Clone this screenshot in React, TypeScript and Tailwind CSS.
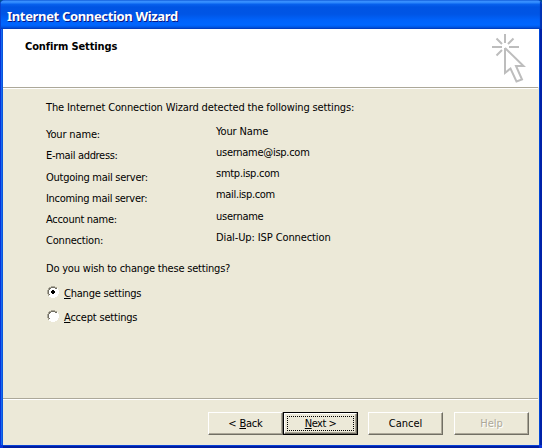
import type { ReactNode } from "react";

const labels = [
  { text: "Your name:", cls: "h-[21px] tracking-[-0.15px]" },
  { text: "E-mail address:", cls: "h-[22px] tracking-[-0.32px]" },
  { text: "Outgoing mail server:", cls: "h-[21px] tracking-[-0.27px]" },
  { text: "Incoming mail server:", cls: "h-[21px] tracking-[-0.3px]" },
  { text: "Account name:", cls: "h-[21px] tracking-[-0.28px]" },
  { text: "Connection:", cls: "h-[28px] tracking-[-0.2px]" },
];

const values = [
  { text: "Your Name", cls: "h-[21px] tracking-[-0.12px]" },
  { text: "username@isp.com", cls: "h-[21px] tracking-[-0.27px]" },
  { text: "smtp.isp.com", cls: "h-[21px] tracking-[-0.27px]" },
  { text: "mail.isp.com", cls: "h-[22px] tracking-[-0.33px]" },
  { text: "username", cls: "h-[21px] tracking-[-0.25px]" },
  { text: "Dial-Up: ISP Connection", cls: "h-[21px] tracking-[-0.11px]" },
];

function PointerIcon() {
  return (
    <svg className="mt-[4px] mr-[13px] h-[52px] w-[35px]" viewBox="491 33 35 52" fill="none" stroke="#bdbdbd" strokeWidth="2">
      <path d="M505 34V43M492 47H502M509 47H519M496.5 38.5L502 44M513.5 38.5L508 44M496.5 55.5L502 50" />
      <path d="M505 48V73L510.5 68.5L516.5 81.5L522 79.5L516 66H523.5L505 48" />
    </svg>
  );
}

function Radio({ checked = false }: { checked?: boolean }) {
  return (
    <svg className="h-[12px] w-[12px]" viewBox="0 0 12 12" shapeRendering="crispEdges">
      <path fill="#fff" d="M4 1H8V2H10V4H11V8H10V10H8V11H4V10H2V8H1V4H2V2H4Z" />
      <path fill="#aca899" d="M4 0H8V1H4ZM2 1H4V2H2ZM8 1H10V2H8ZM1 2H2V4H1ZM0 4H1V8H0ZM1 8H2V10H1Z" />
      <path fill="#716f64" d="M4 1H8V2H4ZM2 2H4V3H3V4H2ZM8 2H10V3H8ZM1 4H2V8H1ZM2 8H3V9H2Z" />
      <path fill="#fff" d="M10 2H11V4H10ZM11 4H12V8H11ZM10 8H11V10H10ZM8 10H10V11H8ZM4 11H8V12H4ZM2 10H4V11H2Z" />
      {checked && <path fill="#000" d="M5 4H7V5H8V7H7V8H5V7H4V5H5Z" />}
    </svg>
  );
}

function Button({ children, className = "h-[23px] w-[75px]" }: { children: ReactNode; className?: string }) {
  return (
    <button className={`flex shrink-0 items-center justify-center border border-t-white border-l-white border-r-[#716f64] border-b-[#716f64] bg-[#ece9d8] shadow-[inset_-1px_-1px_0_#aca899] ${className}`}>
      {children}
    </button>
  );
}

export default function App() {
  return (
    <div className="bg-[#004e98]">
      <div className="flex h-[448px] w-[542px] flex-col overflow-hidden rounded-t-[5px] bg-[#0831d9] font-['DejaVu_Sans_Condensed','DejaVu_Sans',sans-serif] text-[11px] leading-[14px] whitespace-nowrap text-black [font-stretch:condensed]">
        <header className="flex h-[29px] shrink-0 items-center bg-[linear-gradient(#0a58d8_0px,#3c92ff_1px,#2a85fb_3px,#0862ee_4px,#0054e3_7px,#0055e5_14px,#0062fa_20px,#0066ff_25px,#0058e6_27px,#0038b8_29px)] pt-[3px] pl-[7px] shadow-[inset_1px_0_0_#0842d0,inset_-2px_0_1px_#0032b4]">
          <h1 className="font-['Noto_Sans',sans-serif] text-[13px] font-bold tracking-[-0.34px] text-white [text-shadow:1px_1px_0_#0a1883]">Internet Connection Wizard</h1>
        </header>
        <div className="mx-[3px] mb-[3px] flex grow flex-col bg-[#ece9d8] shadow-[-1px_0_0_#0855dd,1px_0_0_#0046d8,0_1px_0_#0842d8,0_3px_0_#001ea0,-2px_0_0_#166aee,-3px_0_0_#0831d9,3px_0_0_#0021a8]">
          <section className="flex h-[58px] shrink-0 justify-between bg-white">
            <h2 className="pt-[11px] pl-[22px] font-bold tracking-[-0.12px]">Confirm Settings</h2>
            <PointerIcon />
          </section>
          <div className="mr-px h-[2px] shrink-0 border-t border-[#aca899] bg-white" />
          <main className="flex grow flex-col pt-[12px] pl-[43px]">
            <p className="h-[27px] tracking-[-0.14px]">The Internet Connection Wizard detected the following settings:</p>
            <div className="flex h-[134px]">
              <dl className="w-[170px]">
                {labels.map((l) => (
                  <dt key={l.text} className={l.cls}>{l.text}</dt>
                ))}
              </dl>
              <dl className="-mt-[3px]">
                {values.map((v) => (
                  <dd key={v.text} className={v.cls}>{v.text}</dd>
                ))}
              </dl>
            </div>
            <p className="h-[24px] tracking-[-0.2px]">Do you wish to change these settings?</p>
            <label className="flex h-[24px] items-start gap-[5px] pl-px tracking-[-0.22px]">
              <Radio checked />
              <span className="pt-px"><u className="underline-offset-1">C</u>hange settings</span>
            </label>
            <label className="flex items-start gap-[5px] pl-px tracking-[-0.2px]">
              <Radio />
              <span className="pt-px"><u className="underline-offset-1">A</u>ccept settings</span>
            </label>
          </main>
          <div className="mr-px h-[2px] shrink-0 border-t border-[#aca899] bg-white" />
          <footer className="flex h-[45px] shrink-0 justify-end pt-[12px] pr-[10px]">
            <Button><span className="tracking-[-0.2px]">&lt; <u className="underline-offset-1">B</u>ack</span></Button>
            <div className="mr-[10px] h-[23px] w-[75px] border border-black">
              <Button className="h-[21px] w-[73px] p-[2px]">
                <span className="flex h-[15px] w-[67px] items-center justify-center border border-dotted border-black tracking-[-0.5px]"><span><u className="underline-offset-1">N</u>ext &gt;</span></span>
              </Button>
            </div>
            <Button className="mr-[11px] h-[23px] w-[75px]">Cancel</Button>
            <Button className="h-[23px] w-[75px] text-[#aca899] [text-shadow:1px_1px_0_#fff]">Help</Button>
          </footer>
        </div>
      </div>
    </div>
  );
}
